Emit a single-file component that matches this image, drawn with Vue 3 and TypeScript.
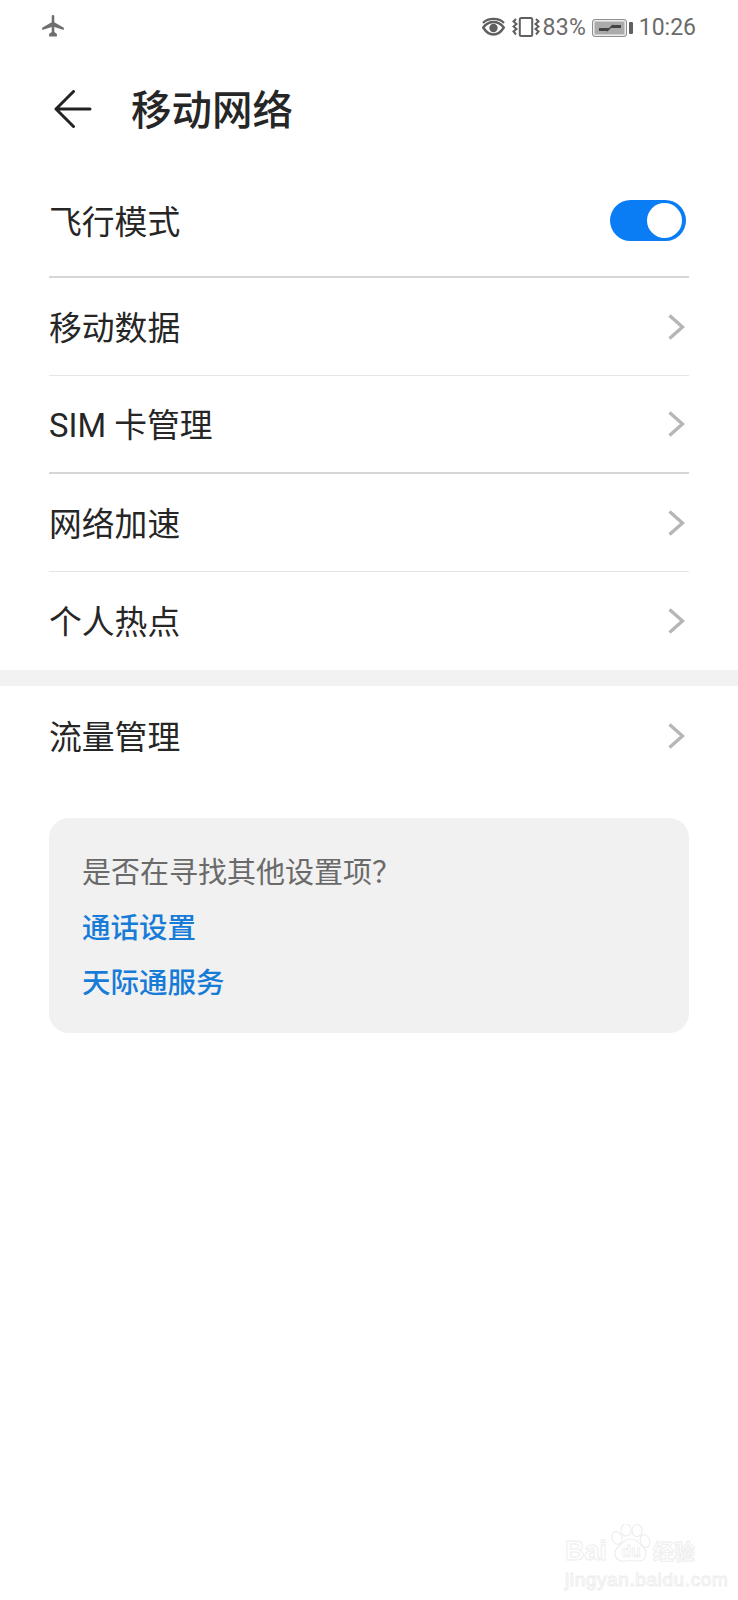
<script setup lang="ts">
interface Row { label: string; divider: 'strong' | 'light' | 'none' }
const rows: Row[] = [
  { label: '移动数据', divider: 'light' },
  { label: 'SIM 卡管理', divider: 'strong' },
  { label: '网络加速', divider: 'light' },
  { label: '个人热点', divider: 'none' },
]
</script>

<template>
  <div class="page">
    <div class="status">
      <svg class="plane" width="22" height="22" viewBox="0 0 22 22" fill="#6e6e6e">
        <path d="M9.7 1.4c0-.8.6-1.400 1.300-1.400s1.300.6 1.300 1.400V7.300l9.500 5.400v2.300l-9.500-3.100v5.200l2.600 1.900V21.500H7.100V19l2.600-1.900v-5.200L.2 15v-2.300l9.500-5.400z" />
      </svg>
      <div class="status-right">
        <svg class="eye" width="23" height="19" viewBox="0 0 23 19" fill="none" stroke="#5f5f5f">
          <path d="M1.200 10.500C4 7 7.500 5 11.500 5S19 7 21.800 10.500C19 15 15.500 17.500 11.500 17.500S4 15 1.200 10.500Z" stroke-width="2.400" />
          <circle cx="11.500" cy="11" r="4.200" fill="#5f5f5f" stroke="none" />
          <path d="M1 6C6 .5 17 .5 22 6" stroke-width="2.200" />
        </svg>
        <svg class="vib" width="28" height="20" viewBox="0 0 28 20" fill="none" stroke="#5f5f5f">
          <rect x="7.800" y="1" width="12.400" height="18" rx="1.500" stroke-width="2" />
          <path d="M4 2 1.500 4.500 4.500 7 1.500 9.500 4.500 12 1.500 14.500 4 17.500" stroke-width="2" />
          <path d="M24 2 26.500 4.500 23.500 7 26.500 9.500 23.500 12 26.500 14.500 24 17.500" stroke-width="2" />
        </svg>
        <span class="pct">83%</span>
        <div class="battery">
          <div class="cell">
            <svg width="22" height="12" viewBox="0 0 22 12" fill="#454545">
              <path d="M0 6H10L15 1 13.500 3H22V6H12L7 11 8.500 9H0Z" />
            </svg>
          </div>
          <span class="nub"></span>
        </div>
        <span class="time">10:26</span>
      </div>
    </div>

    <header class="head">
      <svg class="back" width="38" height="38" viewBox="0 0 38 38" fill="none" stroke="#222" stroke-width="3" stroke-linecap="round" stroke-linejoin="round">
        <path d="M36 19H2M19.500 1.500 2 19l17.500 17.500" />
      </svg>
      <h1 class="title">移动网络</h1>
    </header>

    <div class="row first strong">
      <span class="label">飞行模式</span>
      <span class="toggle"><span class="knob"></span></span>
    </div>

    <div v-for="r in rows" :key="r.label" class="row" :class="r.divider">
      <span class="label">{{ r.label }}</span>
      <svg class="chev" width="17" height="26" viewBox="0 0 17 26" fill="none" stroke="#b6b6b6" stroke-width="3.400">
        <path d="M1.500 1.500 14.500 13 1.500 24.500" />
      </svg>
    </div>

    <div class="band"></div>

    <div class="row last none">
      <span class="label">流量管理</span>
      <svg class="chev" width="17" height="26" viewBox="0 0 17 26" fill="none" stroke="#b6b6b6" stroke-width="3.400">
        <path d="M1.500 1.500 14.500 13 1.500 24.500" />
      </svg>
    </div>

    <section class="card">
      <p class="ask">是否在寻找其他设置项？</p>
      <a class="link">通话设置</a>
      <a class="link">天际通服务</a>
    </section>

    <div class="mark">
      <div class="mark-top">
        <span class="bai">Bai</span>
        <svg class="paw" width="42" height="40" viewBox="0 0 42 40" fill="#fff" stroke="#eeeeee" stroke-width="1.200">
          <ellipse cx="7" cy="14" rx="5" ry="6.500" transform="rotate(-25 7 14)" />
          <ellipse cx="16" cy="6" rx="5" ry="6" />
          <ellipse cx="27" cy="6.500" rx="5" ry="6" />
          <ellipse cx="35" cy="17" rx="4.500" ry="6.500" transform="rotate(-20 35 17)" />
          <path d="M21 15c6 0 8 4 12 8 4 4 5 15-6 14-4-.5-8-1-12 0-11 1-12-9-7-14 4-3 6-8 13-8Z" />
          <text x="21" y="33" text-anchor="middle" class="du">du</text>
        </svg>
        <span class="jy">经验</span>
      </div>
      <div class="url">jingyan.baidu.com</div>
    </div>
  </div>
</template>

<style>
html, body { margin: 0; background: #fff; }
</style>

<style scoped>
.page {
  position: relative;
  width: 738px;
  height: 1600px;
  background: #fff;
  overflow: hidden;
  font-family: Roboto, "Noto Sans CJK SC", sans-serif;
  color: #262626;
}
.status {
  height: 52px;
  box-sizing: border-box;
  padding: 15px 42px 0 42px;
  display: flex;
  justify-content: space-between;
  align-items: flex-start;
  color: #6b6b6b;
}
.status-right {
  display: flex;
  align-items: center;
  height: 23px;
}
.eye { margin-right: 7px; }
.vib { margin-right: 3px; }
.pct { font-size: 23px; line-height: 23px; margin-right: 6px; padding-top: 2px; letter-spacing: .3px; }
.battery { display: flex; align-items: center; margin-right: 6px; padding-top: 2px; }
.cell {
  width: 35px;
  height: 18px;
  box-sizing: border-box;
  border: 1px solid #8f8f8f;
  border-radius: 3px;
  display: flex;
  align-items: center;
  justify-content: center;
  background: #ababab;
  box-shadow: inset 0 0 0 1.500px #efefef;
}
.nub { width: 3.500px; height: 12px; background: #606060; margin-left: 2px; border-radius: 1px; }
.time { font-size: 23px; line-height: 23px; padding-top: 2px; }
.head {
  height: 113px;
  box-sizing: border-box;
  padding: 0 0 0 54px;
  display: flex;
  align-items: center;
}
.back { margin-right: 39px; }
.title {
  margin: 5px 0 0;
  font-size: 40.500px;
  line-height: 56px;
  font-weight: 500;
  color: #262626;
}
.row {
  margin: 0 49px;
  width: 640px;
  height: 98px;
  box-sizing: border-box;
  display: flex;
  align-items: center;
  justify-content: space-between;
  border-bottom: 1px solid transparent;
}
.row.first { height: 113px; }
.row.strong { border-bottom: 2px solid #d6d6d6; }
.row.light { border-bottom: 1px solid #e5e5e5; }
.row.last { height: 100px; }
.label { font-size: 32.800px; line-height: 44px; padding-top: 4px; color: #262626; }
.toggle {
  width: 76px;
  height: 41px;
  margin-right: 3px;
  border-radius: 21px;
  background: #0a7df5;
  display: flex;
  align-items: center;
  justify-content: flex-end;
  padding-right: 4px;
  box-sizing: border-box;
}
.knob { width: 35px; height: 35px; border-radius: 50%; background: #fff; }
.chev { margin-right: 4px; }
.band { height: 16px; background: #f2f2f2; }
.card {
  margin: 32px 49px 0;
  width: 640px;
  height: 215px;
  box-sizing: border-box;
  padding: 27px 33px;
  background: #f1f1f1;
  border-radius: 20px;
  display: flex;
  flex-direction: column;
}
.ask {
  margin: 0;
  font-size: 29px;
  line-height: 56px;
  color: #6a6a6a;
}
.link {
  font-size: 28.500px;
  line-height: 55px;
  font-weight: 500;
  color: #177cd8;
}
.mark {
  position: absolute;
  left: 565px;
  top: 1522px;
  width: 140px;
  color: #fff;
  -webkit-text-stroke: 1px #eeeeee;
}
.mark-top { display: flex; align-items: flex-end; height: 42px; }
.bai { font: 700 27px/26px "Liberation Sans", sans-serif; width: 46px; }
.paw { margin-left: -1px; }
.du { font: 700 16px "Liberation Sans", sans-serif; fill: #fff; stroke: #e8e8e8; stroke-width: .6px; }
.jy { font-size: 21px; line-height: 24px; font-weight: 700; margin-left: 1px; }
.url { font: 400 19px/22px "Liberation Sans", sans-serif; margin-top: 5px; letter-spacing: .6px; white-space: nowrap; }
</style>
